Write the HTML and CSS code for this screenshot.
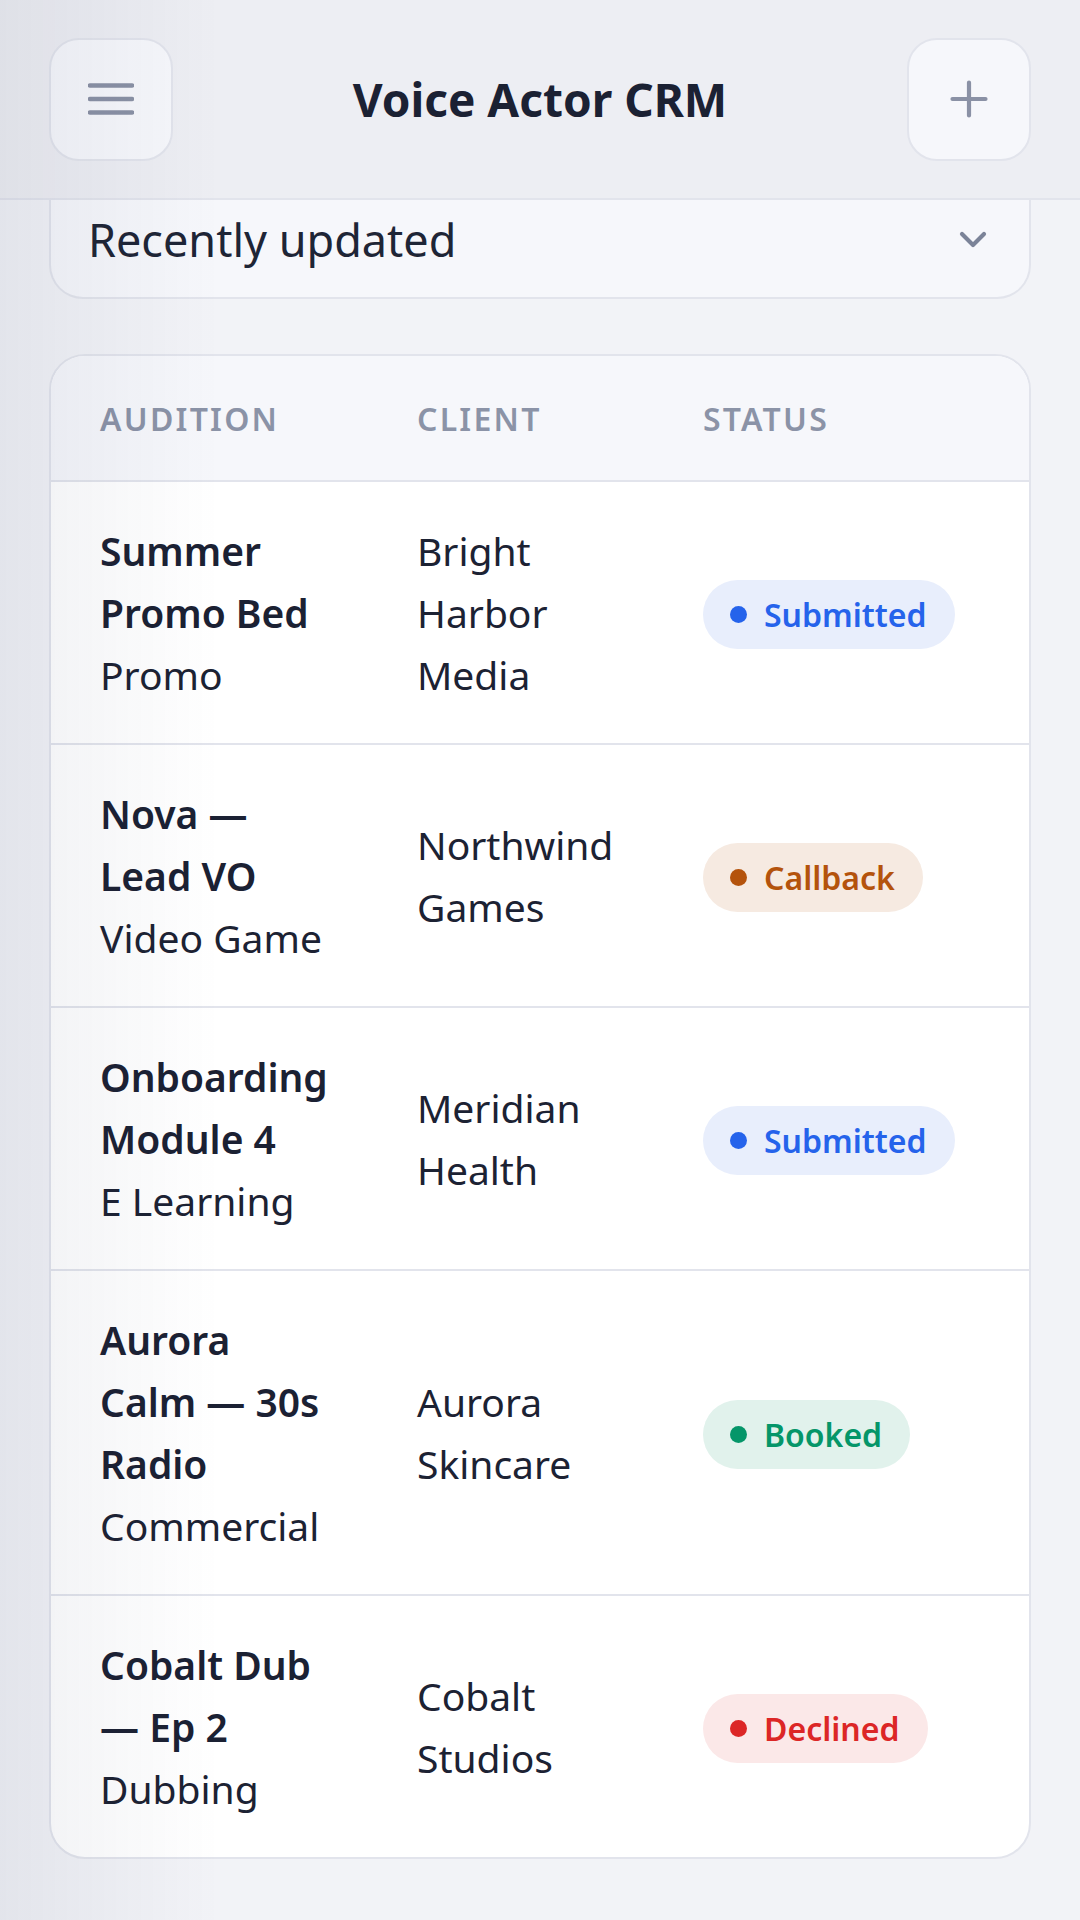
FILE: index.html
```html
<!DOCTYPE html>
<html lang="en">
<head>
    <meta charset="UTF-8">
    <meta name="viewport" content="width=device-width, initial-scale=1.0">
    <title>Voice Actor CRM</title>
    <link rel="stylesheet" href="styles.css">
</head>
<body>
    <header class="topbar">
        <button class="icon-btn" type="button" aria-label="Menu">
            <svg width="46" height="46" viewBox="0 0 46 46" fill="none" stroke="#8a91a5" stroke-width="4.4" stroke-linecap="round">
                <path d="M2 9.5h42M2 23h42M2 36.5h42"/>
            </svg>
        </button>
        <h1 class="title">Voice Actor CRM</h1>
        <button class="icon-btn" type="button" aria-label="Add audition">
            <svg width="38" height="38" viewBox="0 0 38 38" fill="none" stroke="#8a91a5" stroke-width="4.2" stroke-linecap="round">
                <path d="M19 2.5v33M2.5 19h33"/>
            </svg>
        </button>
    </header>

    <main class="content">
        <div class="sort-select">
            <span>Recently updated</span>
            <svg width="28" height="18" viewBox="0 0 28 18" fill="none" stroke="#7b8398" stroke-width="4.2" stroke-linecap="round" stroke-linejoin="round">
                <path d="M3 3l11 11L25 3"/>
            </svg>
        </div>

        <div class="table-card">
            <div class="table-head">
                <span>Audition</span>
                <span>Client</span>
                <span>Status</span>
            </div>

            <div class="table-row">
                <div class="cell">
                    <div class="job-title">Summer Promo Bed</div>
                    <div class="job-type">Promo</div>
                </div>
                <div class="cell">Bright Harbor Media</div>
                <div class="cell"><span class="badge submitted">Submitted</span></div>
            </div>

            <div class="table-row">
                <div class="cell">
                    <div class="job-title">Nova — Lead VO</div>
                    <div class="job-type">Video Game</div>
                </div>
                <div class="cell">Northwind Games</div>
                <div class="cell"><span class="badge callback">Callback</span></div>
            </div>

            <div class="table-row">
                <div class="cell">
                    <div class="job-title">Onboarding Module 4</div>
                    <div class="job-type">E Learning</div>
                </div>
                <div class="cell">Meridian Health</div>
                <div class="cell"><span class="badge submitted">Submitted</span></div>
            </div>

            <div class="table-row">
                <div class="cell">
                    <div class="job-title">Aurora Calm — 30s Radio</div>
                    <div class="job-type">Commercial</div>
                </div>
                <div class="cell">Aurora Skincare</div>
                <div class="cell"><span class="badge booked">Booked</span></div>
            </div>

            <div class="table-row">
                <div class="cell">
                    <div class="job-title">Cobalt Dub — Ep 2</div>
                    <div class="job-type">Dubbing</div>
                </div>
                <div class="cell">Cobalt Studios</div>
                <div class="cell"><span class="badge declined">Declined</span></div>
            </div>
        </div>
    </main>
</body>
</html>
```

FILE: styles.css
```css
body {
    font-family: "Noto Sans", "Open Sans", sans-serif;
    background-color: #f2f3f7;
    color: #1c2233;
    margin: 0;
    min-height: 100vh;
}
/* soft edge shade down the left side of the screen */
body::after {
    content: "";
    position: fixed;
    top: 0;
    left: 0;
    bottom: 0;
    width: 220px;
    background: linear-gradient(to right, rgba(40, 52, 90, 0.07), rgba(40, 52, 90, 0));
    pointer-events: none;
}
.topbar {
    height: 198px;
    display: flex;
    align-items: center;
    justify-content: space-between;
    padding: 0 49px;
    background-color: #edeef3;
    border-bottom: 2px solid #e2e4ec;
}
.icon-btn {
    width: 124px;
    height: 123px;
    display: flex;
    align-items: center;
    justify-content: center;
    padding: 0;
    background-color: #f6f7fb;
    border: 2px solid #e2e4ec;
    border-radius: 30px;
    cursor: pointer;
}
.title {
    margin: 0;
    font-size: 46px;
    font-weight: 700;
    color: #1b2133;
}
.content {
    padding: 0 49px;
}
.sort-select {
    height: 99px;
    display: flex;
    align-items: center;
    justify-content: space-between;
    padding: 0 42px 18px 37px;
    box-sizing: border-box;
    background-color: #f6f7fb;
    border: 2px solid #e2e4ec;
    border-top: none;
    border-radius: 0 0 34px 34px;
    font-size: 45px;
    color: #1e2536;
}
.table-card {
    margin-top: 55px;
    background-color: #ffffff;
    border: 2px solid #e2e4ec;
    border-radius: 36px;
    overflow: hidden;
}
.table-head,
.table-row {
    display: grid;
    grid-template-columns: 317px 286px 1fr;
    align-items: center;
}
.table-head {
    height: 124px;
    background-color: #f6f7fb;
    border-bottom: 2px solid #e2e4ec;
    font-size: 32px;
    font-weight: 600;
    letter-spacing: 0.07em;
    text-transform: uppercase;
    color: #8b93a7;
}
.table-head span {
    padding-left: 49px;
}
.table-row {
    padding: 38px 0 37px;
    border-bottom: 2px solid #e2e4ec;
    font-size: 39px;
    line-height: 62px;
}
.table-row:last-child {
    border-bottom: none;
}
.cell {
    padding: 0 38px 0 49px;
}
.job-title {
    font-weight: 600;
    color: #1b2133;
}
.badge {
    display: inline-flex;
    align-items: center;
    gap: 17px;
    height: 69px;
    padding: 0 28px 0 27px;
    border-radius: 35px;
    font-size: 32px;
    font-weight: 600;
    line-height: 1;
}
.badge::before {
    content: "";
    width: 17px;
    height: 17px;
    border-radius: 50%;
    background-color: currentColor;
}
.badge.submitted {
    background-color: #e8eefc;
    color: #2563eb;
}
.badge.callback {
    background-color: #f6eae1;
    color: #b4530c;
}
.badge.booked {
    background-color: #e1f2ec;
    color: #059669;
}
.badge.declined {
    background-color: #fbe8e8;
    color: #dc2626;
}
```
